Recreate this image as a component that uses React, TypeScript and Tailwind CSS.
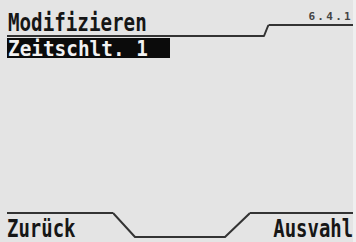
import React from "react";

const mono = { fontFamily: '"DejaVu Sans Mono", "Liberation Mono", monospace' };

export default function App() {
  return (
    <div className="w-[356px] h-[242px] bg-[#e4e4e4] flex flex-col border-r-[3px] border-[#efefef]" style={mono}>
      {/* header */}
      <div className="flex items-start pl-[7px]">
        <div className="w-[256px] h-[37px] border-b-2 border-[#333] pt-[12px] pl-[1px] text-[24px] leading-[22px]">
          <span className="inline-block origin-left scale-x-[0.8] font-bold text-[#161616] whitespace-pre">
            Modifizieren
          </span>
        </div>
        <svg width="6" height="37" className="block shrink-0">
          <path d="M0 36 L1 36 L5 26 L6 25" fill="none" stroke="#333" strokeWidth="2" strokeLinejoin="round" />
        </svg>
        <div className="w-[84px] h-[26px] border-b-2 border-[#333] pt-[11px] text-right text-[11px] leading-[11px]">
          <span className="font-bold text-[#444] tracking-[2.3px]">6.4.1</span>
        </div>
      </div>

      {/* highlighted item */}
      <div className="ml-[7px] mt-[1px] w-[163px] h-[20px] bg-[#0b0b0b] pt-[1px] pl-[1px] text-[22px] leading-[19px]">
        <span className="inline-block origin-left scale-x-[0.88] font-bold text-[#f2f2f2] whitespace-pre">
          Zeitschlt. 1
        </span>
      </div>

      <div className="flex-1" />

      {/* footer */}
      <div className="flex items-start pl-[7px] h-[30px]">
        <div className="w-[106px] h-[30px] border-t-2 border-[#333] pt-[3px] text-[24px] leading-[24px]">
          <span className="inline-block origin-left scale-x-[0.79] font-bold text-[#161616] whitespace-pre">
            Zurück
          </span>
        </div>
        <svg width="137" height="30" className="block shrink-0">
          <polyline points="0,1 22,25 112,25 137,1" fill="none" stroke="#333" strokeWidth="2" strokeLinejoin="round" />
        </svg>
        <div className="w-[103px] h-[30px] border-t-2 border-[#333] pt-[3px] text-right text-[24px] leading-[24px]">
          <span className="inline-block origin-right scale-x-[0.79] font-bold text-[#161616] whitespace-pre">
            Ausvahl
          </span>
        </div>
      </div>
    </div>
  );
}
